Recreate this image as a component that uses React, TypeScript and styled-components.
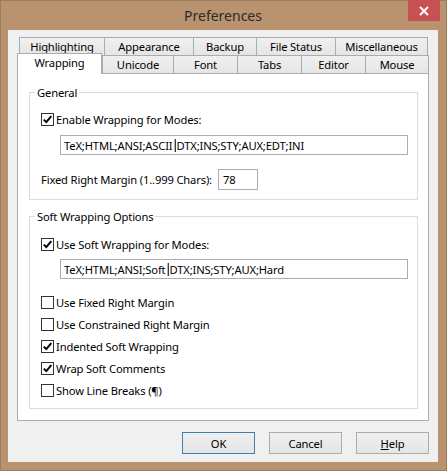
import styled, { createGlobalStyle } from "styled-components";

const GlobalStyle = createGlobalStyle`
  html, body {
    margin: 0;
    padding: 0;
    background: #b99270;
  }
  body {
    font-family: "Noto Sans", "Open Sans", sans-serif;
    font-size: 11.2px;
    letter-spacing: -0.15px;
    color: #000;
  }
  * {
    box-sizing: border-box;
  }
`;

const Window = styled.div`
  position: relative;
  width: 447px;
  height: 471px;
  background: #b99270;
  border: 1px solid #9d7b5d;
  padding: 0 8px 8px 7px;
  display: flex;
  flex-direction: column;
`;

const TitleBar = styled.div`
  height: 30px;
  display: flex;
  align-items: center;
  justify-content: center;
  padding-bottom: 1px;
  font-size: 14px;
  letter-spacing: 0;
  color: #2f2a26;
`;

const CloseButton = styled.div`
  position: absolute;
  top: -1px;
  right: 6px;
  width: 32px;
  height: 21px;
  background: #c75050;
  display: flex;
  align-items: center;
  justify-content: center;
`;

const Client = styled.div`
  flex: 1;
  background: #f0f0f0;
  padding: 7px 9px 8px 9px;
  display: flex;
  flex-direction: column;
`;

const TabRow = styled.div`
  display: flex;
  align-items: flex-start;
  margin-left: 2px;
  height: 18px;
`;

const Tab = styled.div<{ $w: number; $last?: boolean; $active?: boolean }>`
  width: ${(p) => p.$w}px;
  height: ${(p) => (p.$active ? 21 : 18)}px;
  margin-top: ${(p) => (p.$active ? -2 : 0)}px;
  margin-left: ${(p) => (p.$active ? -2 : 0)}px;
  padding-bottom: ${(p) => (p.$active ? 3 : 0)}px;
  position: ${(p) => (p.$active ? "relative" : "static")};
  z-index: ${(p) => (p.$active ? 1 : 0)};
  background: ${(p) => (p.$active ? "#fff" : "linear-gradient(#f0f0f0, #e5e5e5)")};
  border: 1px solid #acacac;
  border-bottom: none;
  border-right: ${(p) => (p.$last || p.$active ? "1px solid #acacac" : "none")};
  display: flex;
  align-items: center;
  justify-content: center;
  white-space: nowrap;
`;

const Panel = styled.div`
  background: #fff;
  border: 1px solid #adadad;
  padding: 11px 10px 11px 11px;
  display: flex;
  flex-direction: column;
  gap: 9px;
`;

const Group = styled.fieldset<{ $pb: number }>`
  margin: 0;
  min-width: 0;
  border: 1px solid #dcdcdc;
  padding: 0 9px ${(p) => p.$pb}px 11px;
`;

const Legend = styled.legend`
  margin-left: -6px;
  padding: 0 2px;
  line-height: 15px;
`;

const CheckRow = styled.label<{ $mt?: number }>`
  display: flex;
  align-items: center;
  height: 22px;
  margin-top: ${(p) => p.$mt ?? 0}px;
  gap: 2px;
  white-space: nowrap;
`;

const Box = styled.span`
  width: 13px;
  height: 13px;
  border: 1px solid #333;
  background: #fff;
  display: flex;
  align-items: center;
  justify-content: center;
`;

const TextField = styled.div<{ $mt: number }>`
  margin: ${(p) => p.$mt}px 0 0 19px;
  height: 20px;
  border: 1px solid #abadb3;
  background: #fff;
  display: flex;
  align-items: center;
  padding-left: 3px;
  white-space: nowrap;
`;

const Bar = styled.span`
  display: inline-block;
  width: 2px;
  height: 13px;
  margin: 0 1px;
  border-left: 1px solid #b4b4b4;
  background: #3c3c3c;
`;

const MarginRow = styled.div`
  display: flex;
  align-items: center;
  height: 21px;
  margin-top: 14px;
`;

const MarginLabel = styled.span`
  width: 177px;
  white-space: nowrap;
`;

const SmallField = styled.div`
  width: 40px;
  height: 21px;
  border: 1px solid #abadb3;
  background: #fff;
  display: flex;
  align-items: center;
  padding-left: 4px;
`;

const ButtonRow = styled.div`
  display: flex;
  justify-content: flex-end;
  gap: 14px;
  margin-top: 11px;
`;

const Button = styled.div<{ $default?: boolean }>`
  width: 73px;
  height: 22px;
  border: 1px solid ${(p) => (p.$default ? "#3c7fb1" : "#acacac")};
  background: linear-gradient(#f0f0f0, #e5e5e5);
  display: flex;
  align-items: center;
  justify-content: center;
`;

const Check = ({ on }: { on: boolean }) => (
  <Box>
    {on && (
      <svg width="11" height="11" viewBox="0 0 11 11">
        <path d="M1.8 5.6 L4.3 8.1 L9.3 2.2" fill="none" stroke="#000" strokeWidth="2" />
      </svg>
    )}
  </Box>
);

const rowOne = [
  { label: "Highlighting", w: 85 },
  { label: "Appearance", w: 89 },
  { label: "Backup", w: 63 },
  { label: "File Status", w: 79 },
  { label: "Miscellaneous", w: 93 },
];

const rowTwo = [
  { label: "Wrapping", w: 85 },
  { label: "Unicode", w: 71 },
  { label: "Font", w: 64 },
  { label: "Tabs", w: 64 },
  { label: "Editor", w: 64 },
  { label: "Mouse", w: 64 },
];

const softOptions = [
  { label: "Use Fixed Right Margin", on: false },
  { label: "Use Constrained Right Margin", on: false },
  { label: "Indented Soft Wrapping", on: true },
  { label: "Wrap Soft Comments", on: true },
  { label: "Show Line Breaks (¶)", on: false },
];

export default function App() {
  return (
    <>
      <GlobalStyle />
      <Window>
        <TitleBar>Preferences</TitleBar>
        <CloseButton>
          <svg width="10" height="10" viewBox="0 0 10 10">
            <path d="M1 1 L9 9 M9 1 L1 9" stroke="#fff" strokeWidth="2" />
          </svg>
        </CloseButton>
        <Client>
          <TabRow>
            {rowOne.map((t, i) => (
              <Tab key={t.label} $w={t.w} $last={i === rowOne.length - 1}>
                {t.label}
              </Tab>
            ))}
          </TabRow>
          <TabRow>
            {rowTwo.map((t, i) => (
              <Tab
                key={t.label}
                $w={t.w}
                $active={i === 0}
                $last={i === rowTwo.length - 1}
              >
                {t.label}
              </Tab>
            ))}
          </TabRow>
          <Panel>
            <Group $pb={9}>
              <Legend>General</Legend>
              <CheckRow $mt={8}>
                <Check on />
                Enable Wrapping for Modes:
              </CheckRow>
              <TextField $mt={5}>
                TeX;HTML;ANSI;ASCII<Bar />DTX;INS;STY;AUX;EDT;INI
              </TextField>
              <MarginRow>
                <MarginLabel>Fixed Right Margin (1..999 Chars):</MarginLabel>
                <SmallField>78</SmallField>
              </MarginRow>
            </Group>
            <Group $pb={7}>
              <Legend>Soft Wrapping Options</Legend>
              <CheckRow $mt={9}>
                <Check on />
                Use Soft Wrapping for Modes:
              </CheckRow>
              <TextField $mt={4}>
                TeX;HTML;ANSI;Soft<Bar />DTX;INS;STY;AUX;Hard
              </TextField>
              {softOptions.map((o, i) => (
                <CheckRow key={o.label} $mt={i === 0 ? 12 : 0}>
                  <Check on={o.on} />
                  {o.label}
                </CheckRow>
              ))}
            </Group>
          </Panel>
          <ButtonRow>
            <Button $default>OK</Button>
            <Button>Cancel</Button>
            <Button>
              <span>
                <u>H</u>elp
              </span>
            </Button>
          </ButtonRow>
        </Client>
      </Window>
    </>
  );
}
